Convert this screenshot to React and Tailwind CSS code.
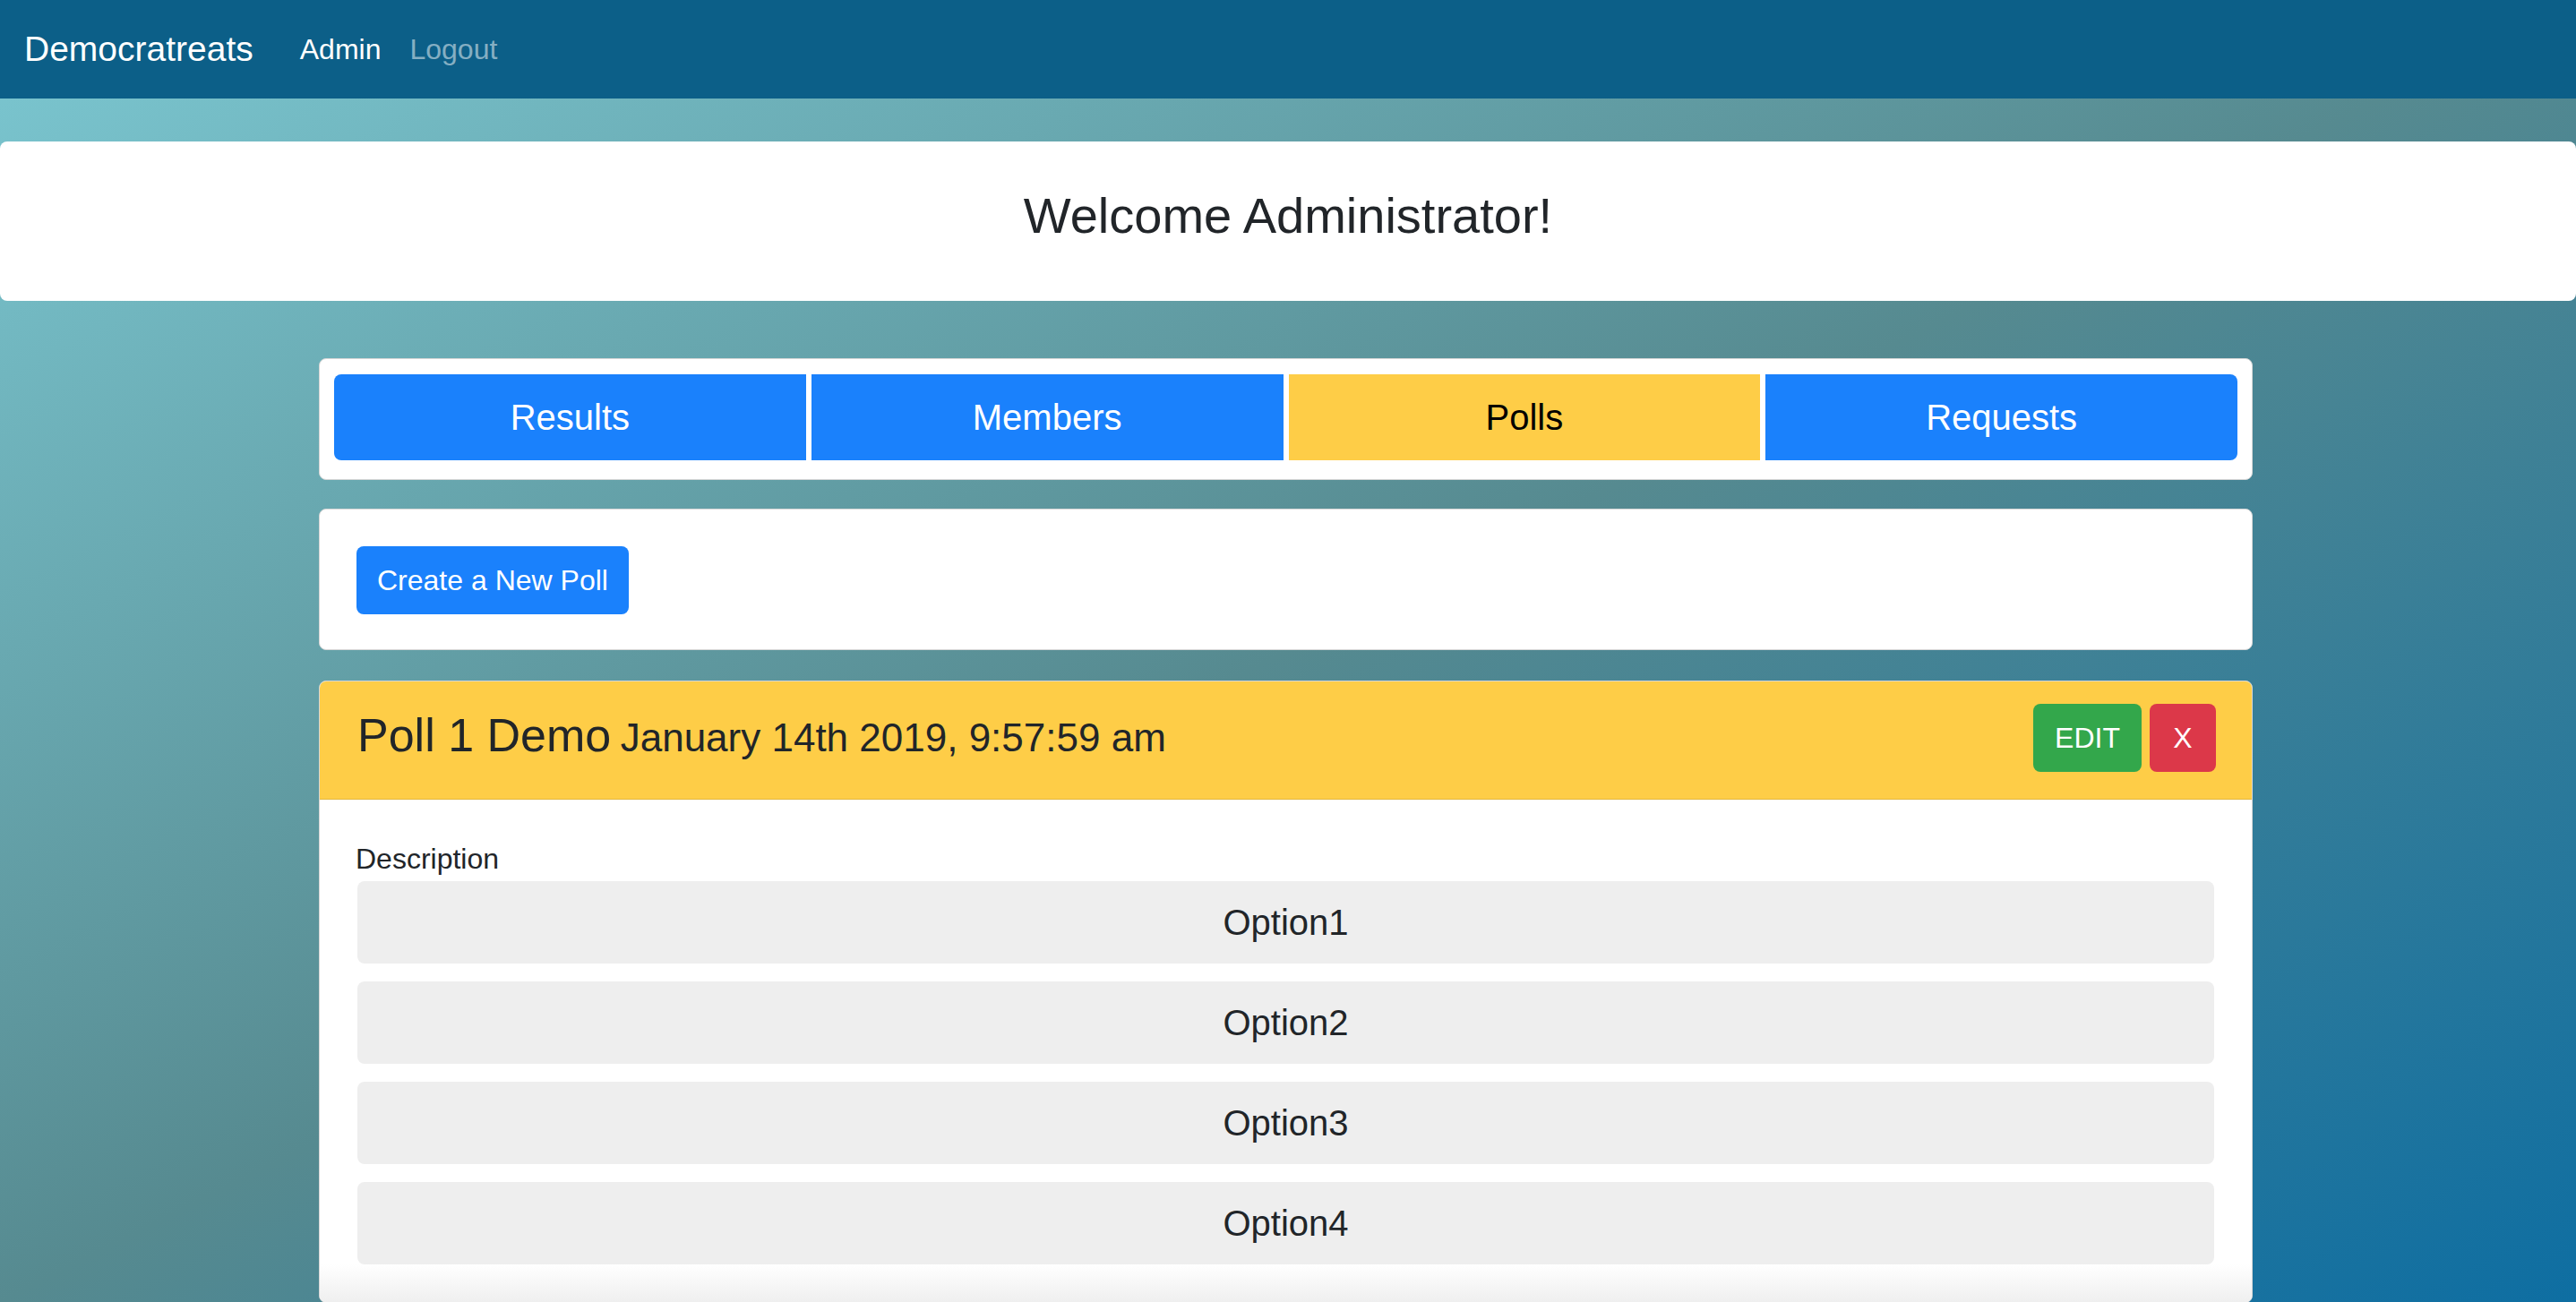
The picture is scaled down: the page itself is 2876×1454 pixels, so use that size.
import React from 'react';

const tabs = [
  { label: 'Results', active: false },
  { label: 'Members', active: false },
  { label: 'Polls', active: true },
  { label: 'Requests', active: false },
];

const options = ['Option1', 'Option2', 'Option3', 'Option4'];

const App = () => {
  return (
    <div className="h-[1454px] overflow-hidden bg-[linear-gradient(to_bottom_right,#7cc8d2,#568a90,#0e6ea2)] font-['Liberation_Sans',Arial,sans-serif] text-[#212529]">
      {/* Navbar */}
      <nav className="h-[110px] bg-[#0c5f88] flex items-center pl-[27px]">
        <span className="text-[39px] leading-[60px] text-white mr-[36px]">Democratreats</span>
        <a className="px-[16px] text-[32px] text-white">Admin</a>
        <a className="px-[16px] text-[32px] text-white/50">Logout</a>
      </nav>

      {/* Welcome */}
      <div className="mt-[48px] h-[178px] bg-white rounded-[8px] flex justify-center pt-[49px]">
        <h3 className="text-[56px] leading-[1.2] font-medium">Welcome Administrator!</h3>
      </div>

      <div className="ml-[356px] w-[2159px] mt-[64px]">
        {/* Tabs */}
        <div className="bg-white border border-[#d6d6d6] rounded-[8px] pt-[17px] pb-[21px] px-[16px]">
          <div className="flex gap-[6px]">
            {tabs.map((t, i) => (
              <button
                key={t.label}
                className={
                  'flex-1 h-[96px] text-[40px] ' +
                  (t.active ? 'bg-[#fecd47] text-black ' : 'bg-[#1a81fc] text-white ') +
                  (i === 0 ? 'rounded-l-[8px] ' : '') +
                  (i === tabs.length - 1 ? 'rounded-r-[8px]' : '')
                }
              >
                {t.label}
              </button>
            ))}
          </div>
        </div>

        {/* Create */}
        <div className="mt-[32px] bg-white border border-[#d6d6d6] rounded-[8px] pt-[41px] pb-[39px] px-[41px]">
          <button className="h-[76px] px-[23px] bg-[#1a81fc] text-white text-[32px] rounded-[8px]">
            Create a New Poll
          </button>
        </div>

        {/* Poll card */}
        <div className="mt-[34px] bg-white border border-[#d6d6d6] rounded-[8px] overflow-hidden">
          <div className="h-[132px] flex items-center justify-between pl-[42px] pr-[40px] pb-[5px] bg-[#fecd47] border-b border-[#e2b63e]">
            <h3 className="mb-[6px] leading-[1.2] font-medium text-[52px]">
              Poll 1 Demo <small className="text-[44px] font-normal -ml-[4px]">January 14th 2019, 9:57:59 am</small>
            </h3>
            <div className="flex gap-[9px]">
              <button className="h-[76px] px-[24px] bg-[#33a74b] text-white text-[32px] rounded-[8px]">EDIT</button>
              <button className="h-[76px] w-[74px] bg-[#dc3849] text-white text-[32px] rounded-[8px]">X</button>
            </div>
          </div>

          <div className="pt-[42px] px-[40px]">
            <p className="text-[32px] leading-[48px]">Description</p>
            <div className="mt-[1px] mx-[2px] flex flex-col gap-[20px]">
              {options.map((o) => (
                <div key={o} className="h-[92px] bg-[#eeeeee] rounded-[8px] flex items-center justify-center text-[40px]">
                  {o}
                </div>
              ))}
            </div>
          </div>
          <div className="h-[42px] bg-[linear-gradient(to_bottom,#ffffff,#efefef)]" />
        </div>
      </div>
    </div>
  );
};

export default App;
